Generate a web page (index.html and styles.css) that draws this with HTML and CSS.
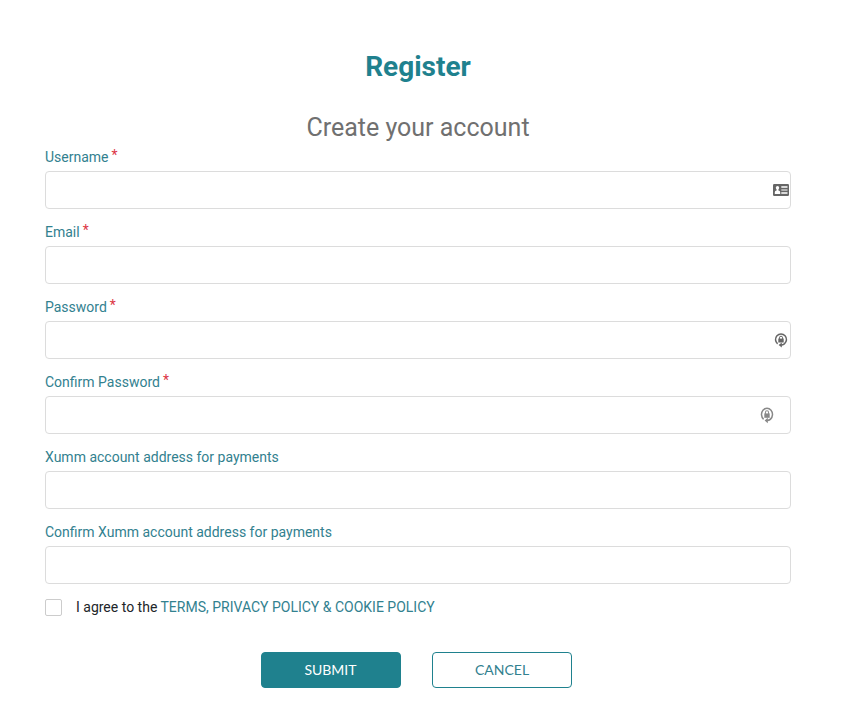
FILE: index.html
```html
<!DOCTYPE html>
<html lang="en">
<head>
<meta charset="utf-8">
<title>Register</title>
<link rel="stylesheet" href="styles.css">
</head>
<body>
<form class="form">
  <h1>Register</h1>
  <h2>Create your account</h2>
  <div class="field"><label>Username<span class="req">*</span></label><div class="input">
    <svg class="card" width="16" height="12" viewBox="0 0 16 12"><rect width="16" height="12" rx="1.2" fill="#666"/><circle cx="4.5" cy="3.8" r="1.7" fill="#fff"/><path d="M1.8 10V8.2Q1.8 6.9 3.6 6.6V5H5.4V6.6Q7.2 6.9 7.2 8.2V10Z" fill="#fff"/><path d="M8.3 3H14.5M8.3 9H14.5" stroke="#fff" stroke-width="1.4"/><path d="M8.3 6H14.5" stroke="#ccc" stroke-width="1.5"/></svg>
  </div></div>
  <div class="field"><label>Email<span class="req">*</span></label><div class="input"></div></div>
  <div class="field"><label>Password<span class="req">*</span></label><div class="input">
    <svg class="lock" width="16" height="16" viewBox="0 0 16 16"><path d="M4.6 11.8A5.5 5.5 0 1 1 11.4 11.8Q10 12.9 8 12.9" fill="none" stroke="#666" stroke-width="1.5"/><path d="M8.8 10.4V15.4L5.6 12.9Z" fill="#666"/><rect x="5.3" y="6.6" width="5.4" height="3.9" fill="#666"/><path d="M6.4 7V5.8a1.6 1.6 0 0 1 3.2 0V7" fill="none" stroke="#666"/></svg>
  </div></div>
  <div class="field"><label>Confirm Password<span class="req">*</span></label><div class="input inset">
    <svg class="lock" width="16" height="18" viewBox="0 0 16 16" preserveAspectRatio="none"><path d="M4.6 11.8A5.5 5.5 0 1 1 11.4 11.8Q10 12.9 8 12.9" fill="none" stroke="#888" stroke-width="1.5"/><path d="M8.8 10.4V15.4L5.6 12.9Z" fill="#888"/><rect x="5.3" y="6.6" width="5.4" height="3.9" fill="#888"/><path d="M6.4 7V5.8a1.6 1.6 0 0 1 3.2 0V7" fill="none" stroke="#888"/></svg>
  </div></div>
  <div class="field"><label>Xumm account address for payments</label><div class="input"></div></div>
  <div class="field"><label>Confirm Xumm account address for payments</label><div class="input"></div></div>
  <div class="agree"><span class="box"></span><span>I agree to the <a>TERMS, PRIVACY POLICY &amp; COOKIE POLICY</a></span></div>
  <div class="actions"><button type="button" class="submit">SUBMIT</button><button type="button" class="cancel">CANCEL</button></div>
</form>
</body>
</html>
```
FILE: styles.css
```css
* { box-sizing: border-box; }
body { margin: 0; background: #fff; font: 14px/20px Roboto, sans-serif; color: #212529; }
.form { width: 746px; margin-left: 45px; padding-top: 47px; }
h1 { margin: 0; font-size: 28px; line-height: 40px; font-weight: 700; color: #1f818e; text-align: center; }
h2 { margin: 23px 0 0; font-size: 25px; line-height: 36px; height: 35px; font-weight: 400; color: #707070; text-align: center; }
.field { height: 75px; padding-top: 2px; }
.field label { display: flex; height: 24px; line-height: 20px; color: #32818f; }
.req { color: #dc3545; margin-left: 3px; line-height: 16px; }
.input { height: 38px; border: 1px solid #dcdcdc; border-radius: 4px; display: flex; align-items: center; justify-content: flex-end; padding-right: 1px; }
.inset { padding-right: 15px; }
.agree { display: flex; align-items: center; height: 20px; margin-top: 2px; gap: 14px; }
.box { width: 17px; height: 17px; border: 1px solid #ccc; border-radius: 2px; }
.agree a { color: #32818f; }
.actions { display: flex; gap: 31px; margin: 35px 0 0 216px; }
button { width: 140px; height: 36px; border-radius: 4px; border: 1px solid #1f818e; font: 14px/20px Lato, sans-serif; padding: 0; }
.submit { background: #1f818e; color: #fff; padding-right: 1px; }
.cancel { background: #fff; color: #32818f; }
```
